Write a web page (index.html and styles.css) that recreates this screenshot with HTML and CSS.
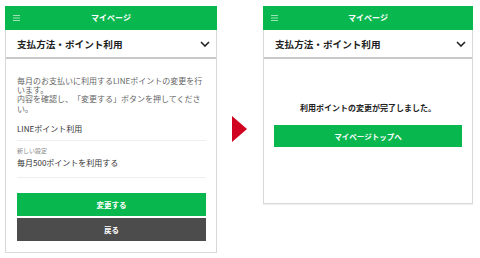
FILE: index.html
```html
<!DOCTYPE html>
<html lang="ja">
<head>
<meta charset="utf-8">
<link rel="stylesheet" href="styles.css">
</head>
<body>
<div class="stage">
  <section class="phone phone-left">
    <header class="bar">
      <svg class="menu" width="7" height="6" viewBox="0 0 7 6"><path d="M0 0.5H7M0 3H7M0 5.5H7" stroke="#fff" stroke-opacity="0.75" stroke-width="0.8"/></svg>
      <span class="bar-title">マイページ</span>
    </header>
    <div class="frame">
      <div class="title-row">
        <span class="title">支払方法・ポイント利用</span>
        <svg class="chev" width="10" height="6" viewBox="0 0 10 6"><path d="M1 1L5 5L9 1" fill="none" stroke="#222" stroke-width="1.6"/></svg>
      </div>
      <div class="content">
        <p class="intro">毎月のお支払いに利用するLINEポイントの変更を行います。<br>内容を確認し、「変更する」ボタンを押してください。</p>
        <div class="row row-first">LINEポイント利用</div>
        <div class="row row-second">
          <div class="label">新しい設定</div>
          <div class="value">毎月500ポイントを利用する</div>
        </div>
        <div class="buttons">
          <div class="btn btn-green">変更する</div>
          <div class="btn btn-dark">戻る</div>
        </div>
      </div>
    </div>
  </section>

  <div class="arrow"></div>

  <section class="phone phone-right">
    <header class="bar">
      <svg class="menu" width="7" height="6" viewBox="0 0 7 6"><path d="M0 0.5H7M0 3H7M0 5.5H7" stroke="#fff" stroke-opacity="0.75" stroke-width="0.8"/></svg>
      <span class="bar-title">マイページ</span>
    </header>
    <div class="frame">
      <div class="title-row">
        <span class="title">支払方法・ポイント利用</span>
        <svg class="chev" width="10" height="6" viewBox="0 0 10 6"><path d="M1 1L5 5L9 1" fill="none" stroke="#222" stroke-width="1.6"/></svg>
      </div>
      <div class="content done">
        <p class="done-msg">利用ポイントの変更が完了しました。</p>
        <div class="btn btn-green">マイページトップへ</div>
      </div>
    </div>
  </section>
</div>
</body>
</html>
```

FILE: styles.css
```css
html, body {
  margin: 0;
  padding: 0;
  background: #fff;
}
body {
  font-family: "Noto Sans CJK JP", "Noto Sans", sans-serif;
  color: #333;
  text-spacing-trim: space-all;
}
.stage {
  display: flex;
  align-items: flex-start;
  padding: 6px 0 0 5px;
}
.phone-left { width: 212px; }
.phone-right { width: 210px; }
.bar {
  position: relative;
  height: 24px;
  background: #08b84e;
  display: flex;
  align-items: center;
  justify-content: center;
}
.menu {
  position: absolute;
  left: 8px;
  top: 9px;
}
.bar-title {
  color: #fff;
  font-size: 8px;
  font-weight: 700;
  line-height: 10px;
}
.frame {
  border: 1px solid #d9d9d9;
  border-top: none;
  box-shadow: 0 1px 1px rgba(0,0,0,0.06);
}
.title-row {
  height: 27px;
  display: flex;
  align-items: center;
  justify-content: space-between;
  padding: 0 6px 0 11px;
  border-bottom: 2px solid #c9c9c9;
}
.title {
  font-size: 9.6px;
  font-weight: 700;
  color: #222;
  line-height: 12px;
}
.chev { display: block; }
.content {
  padding: 17px 10px 11px 11px;
}
.intro {
  margin: 0;
  font-size: 8px;
  line-height: 9.2px;
  color: #666;
}
.row {
  font-size: 8px;
  line-height: 10px;
  color: #333;
  border-bottom: 1px solid #eeeeee;
}
.row-first {
  margin-top: 11px;
  padding-bottom: 6px;
}
.row-second {
  padding: 6px 0 9px;
}
.label {
  font-size: 6px;
  line-height: 8px;
  color: #888;
  margin-bottom: 3px;
}
.buttons {
  margin-top: 15px;
  display: flex;
  flex-direction: column;
  gap: 2px;
}
.btn {
  height: 23px;
  display: flex;
  align-items: center;
  justify-content: center;
  color: #fff;
  font-size: 7.5px;
  font-weight: 700;
}
.btn-green { background: #08b84e; }
.btn-dark { background: #4c4c4c; }
.arrow {
  margin: 110px 16px 0 15px;
  width: 0;
  height: 0;
  border-top: 13.5px solid transparent;
  border-bottom: 13.5px solid transparent;
  border-left: 15px solid #d0021f;
}
.done {
  padding: 44px 10px 56px 10px;
}
.done-msg {
  margin: 0 0 12px;
  text-align: center;
  font-size: 8px;
  line-height: 10px;
  font-weight: 700;
  color: #222;
}
.done .btn { height: 22px; }
```
